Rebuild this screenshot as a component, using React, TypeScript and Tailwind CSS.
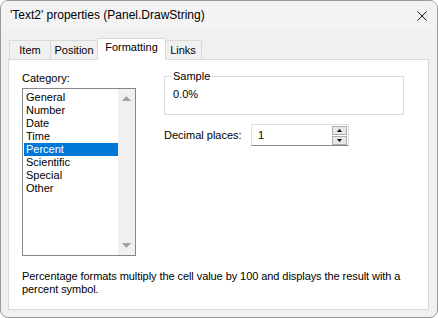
import React from "react";

const font = { fontFamily: '"Liberation Sans", Arial, sans-serif' };

function Tab({ label, selected, w }: { label: string; selected?: boolean; w: string }) {
  if (selected) {
    return (
      <div
        className={`${w} h-[22px] -mx-[1px] relative z-10 bg-white border border-[#d9d9d9] border-b-white flex items-center justify-center text-[11px] text-black -mb-[1px]`}
      >
        <span className="-mt-[3px]">{label}</span>
      </div>
    );
  }
  return (
    <div
      className={`${w} h-[19px] bg-[#f0f0f0] border border-[#d9d9d9] border-b-0 -ml-[1px] first:ml-0 flex items-center justify-center text-[11px] text-black`}
    >
      <span className="mt-[1px]">{label}</span>
    </div>
  );
}

const items = ["General", "Number", "Date", "Time", "Percent", "Scientific", "Special", "Other"];

export default function App() {
  return (
    <div className="w-[438px] h-[318px] bg-white" style={font}>
      <div className="w-[438px] h-[318px] rounded-[8px] border border-[#9a9a9a] bg-[#f0f0f0] overflow-hidden flex flex-col">
        {/* title bar */}
        <div className="h-[29px] bg-[#f3f3f3] flex items-center justify-between pl-[9px] pr-[10px]">
          <span className="text-[12px] text-black mt-[-1px]">'Text2' properties (Panel.DrawString)</span>
          <svg width="10" height="10" viewBox="0 0 10 10" className="mt-[1px]">
            <path d="M0.5 0.5 L9.5 9.5 M9.5 0.5 L0.5 9.5" stroke="#1a1a1a" strokeWidth="1" />
          </svg>
        </div>
        {/* body */}
        <div className="flex-1 flex flex-col pl-[7px] pr-[8px] pt-[8px]">
          {/* tabs */}
          <div className="flex items-end h-[21px] pl-[1px]">
            <Tab label="Item" w="w-[42px]" />
            <Tab label="Position" w="w-[48px]" />
            <Tab label="Formatting" selected w="w-[69px]" />
            <Tab label="Links" w="w-[38px]" />
          </div>
          {/* panel */}
          <div className="h-[251px] bg-white border border-[#d9d9d9] pl-[13px] pr-[13px] pt-[10px] flex flex-col">
            <div className="flex">
              <div className="w-[114px] flex flex-col">
                <div className="h-[15px] leading-[15px] text-[11px] text-black mt-[1px]">Category:</div>
                <div className="mt-[2px] h-[168px] border border-[#828790] bg-white flex">
                  <div className="flex-1 flex flex-col pt-[2px] pl-[1px]">
                    {items.map((it) => (
                      <div
                        key={it}
                        className={`h-[13px] leading-[13px] text-[11px] pl-[2px] ${
                          it === "Percent" ? "bg-[#0078d7] text-white" : "text-black"
                        }`}
                      >
                        {it}
                      </div>
                    ))}
                  </div>
                  <div className="w-[17px] bg-[#f0f0f0] flex flex-col items-center justify-between py-[7px]">
                    <svg width="9" height="5" viewBox="0 0 9 5">
                      <path d="M0 5 L4.5 0 L9 5 Z" fill="#a3a3a3" />
                    </svg>
                    <svg width="9" height="5" viewBox="0 0 9 5">
                      <path d="M0 0 L9 0 L4.5 5 Z" fill="#a3a3a3" />
                    </svg>
                  </div>
                </div>
              </div>
              <div className="ml-[28px] flex flex-col">
                <fieldset className="w-[240px] h-[46px] border border-[#dcdcdc] px-[8px] -mt-[1px]">
                  <legend className="px-[1px] -ml-[1px] text-[11px] leading-[15px] text-black">Sample</legend>
                  <div className="text-[11px] leading-[15px] text-black mt-[3px]">0.0%</div>
                </fieldset>
                <div className="flex items-center mt-[9px]">
                  <span className="w-[87px] text-[11px] text-black">Decimal places:</span>
                  <div className="w-[98px] h-[22px] border border-[#e0e0e0] border-b-[#868686] bg-white flex items-center">
                    <span className="flex-1 pl-[6px] text-[11px] text-black">1</span>
                    <div className="flex flex-col gap-[1px] mr-[1px]">
                      <div className="w-[15px] h-[9px] border border-[#adadad] bg-[#e8e8e8] flex items-center justify-center">
                        <svg width="5" height="3" viewBox="0 0 5 3">
                          <path d="M0 3 L2.5 0 L5 3 Z" fill="#000" />
                        </svg>
                      </div>
                      <div className="w-[15px] h-[9px] border border-[#adadad] bg-[#e8e8e8] flex items-center justify-center">
                        <svg width="5" height="3" viewBox="0 0 5 3">
                          <path d="M0 0 L5 0 L2.5 3 Z" fill="#000" />
                        </svg>
                      </div>
                    </div>
                  </div>
                </div>
              </div>
            </div>
            <p className="mt-[14px] text-[11px] leading-[13px] tracking-[-0.07px] text-black">
              Percentage formats multiply the cell value by 100 and displays the result with a percent symbol.
            </p>
          </div>
        </div>
      </div>
    </div>
  );
}
